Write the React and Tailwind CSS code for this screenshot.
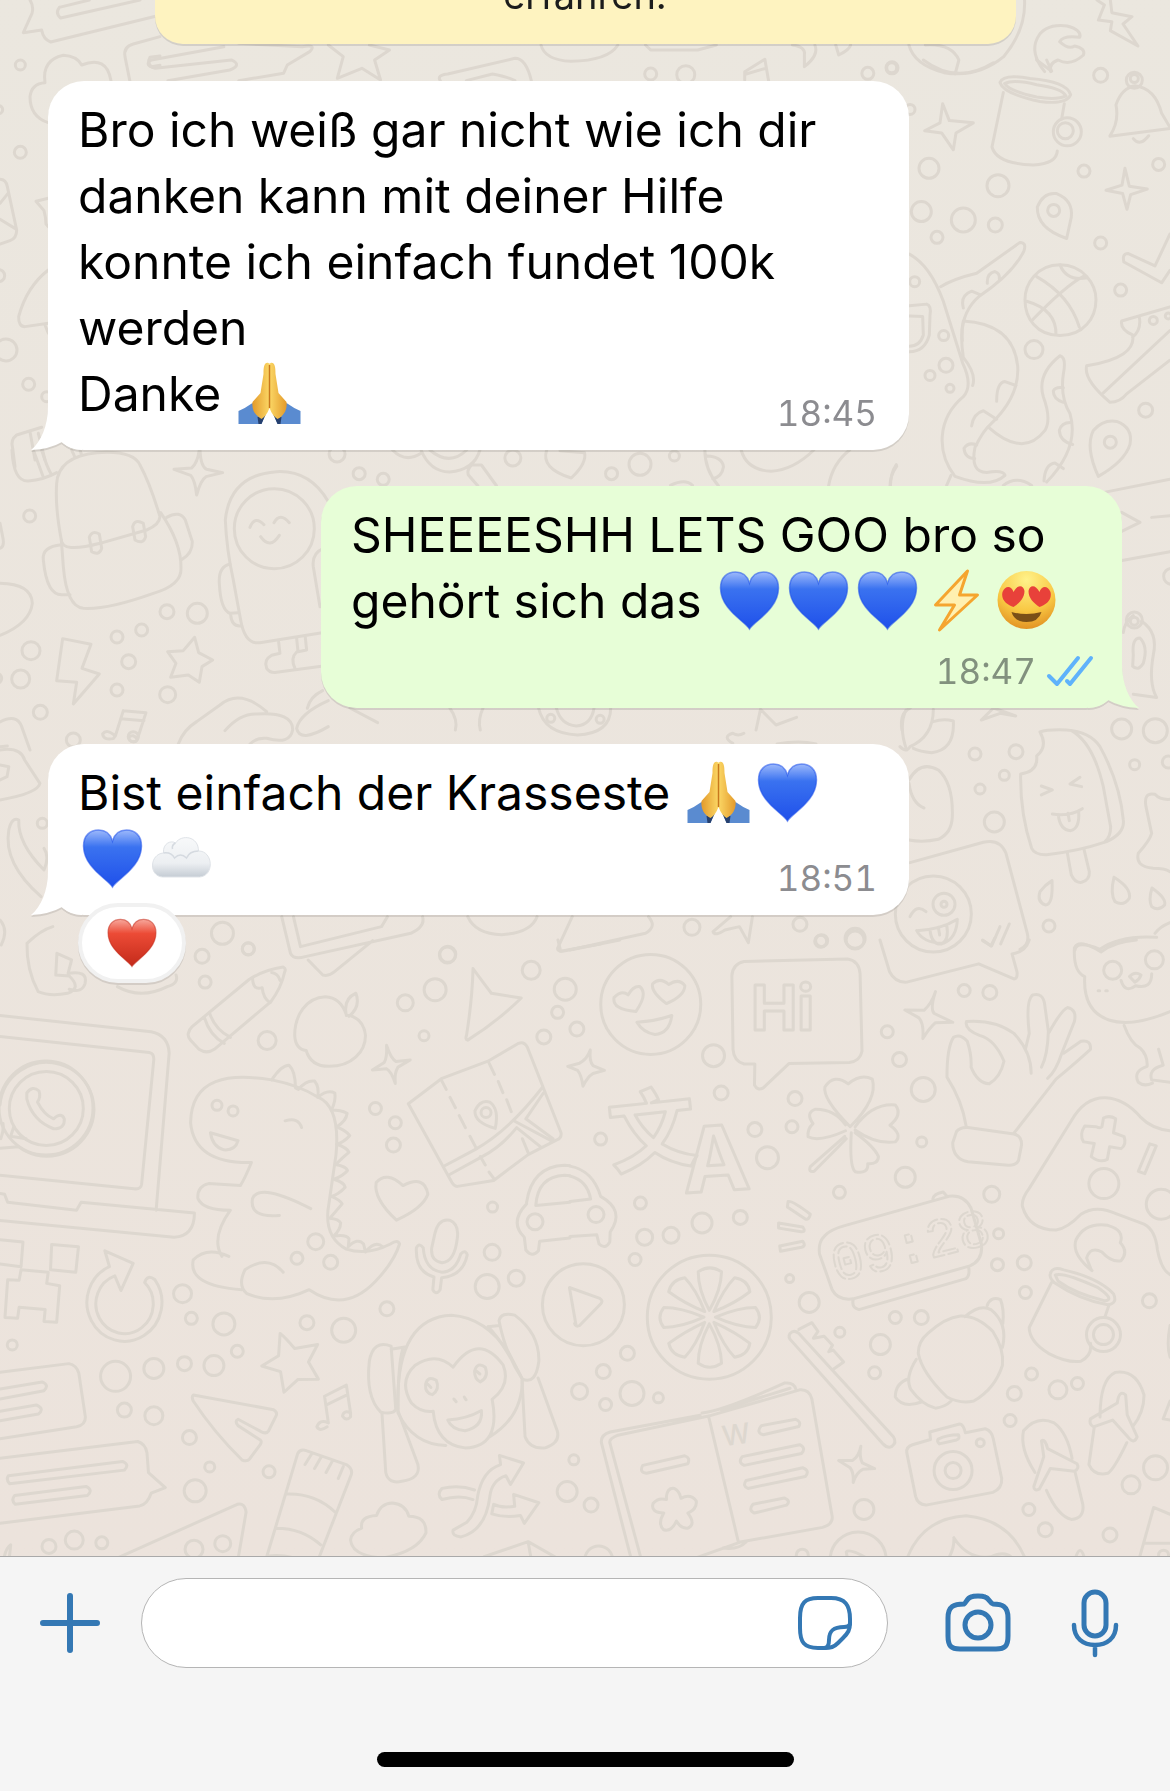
// src/App.jsx
import React, { useId } from 'react';

// Doodle wallpaper. Each tile has its own origin and scale, so the strokes are non-scaling.
const tiles = [
  {
    // top strip
    x: 0, y: 0, sx: 0.7462, sy: 0.3333,
    dots: [[872, 222, 6], [919, 224, 9], [1163, 220, 6], [1195, 203, 5], [1475, 226, 7]],
    paths: [
      'M320 130 L405 140 Q425 132 415 155 L385 195 L380 220 L320 242',
      'M203 180 L300 140 M208 205 L310 180 Q325 195 308 210 L225 242 M203 180 Q192 195 208 205',
      'M440 135 L460 170 L452 235 L485 205 L510 240 L502 180 L522 150 L495 135',
      'M590 242 Q585 225 600 222 L690 175 Q705 175 712 242 M625 242 L660 222 Q680 230 690 242',
      'M725 135 Q730 180 765 184 Q815 182 828 135 M865 135 L872 150 L935 150 L960 135',
      'M1062 135 Q1080 140 1078 165 L1078 200 Q1098 165 1092 135 M1120 135 L1124 165 Q1138 150 1140 135',
      'M998 240 L998 215 L1025 178 L1030 242 M1000 222 L1026 205',
      'M1218 135 Q1225 195 1265 218 Q1310 235 1345 170 Q1375 90 1373 0 M1240 135 Q1275 130 1285 180 L1280 222',
      'M1400 215 Q1380 160 1390 115 Q1400 70 1430 78 Q1450 90 1447 112 Q1425 105 1420 125 Q1432 150 1440 138 Q1455 145 1452 165 Q1435 200 1418 180 Q1405 190 1408 215',
      'M1470 0 L1480 15 L1472 60 L1490 65 L1488 92 L1525 138 L1505 72 L1517 50 L1490 38 L1488 0',
    ],
  },
  {
    // left column beside the first message
    x: 0, y: 0, sx: 0.3333, sy: 0.3333,
    dots: [[61, 195, 5], [61, 457, 6], [-4, 329, 4], [-4, 827, 6], [18, 1050, 11], [86, 1153, 6], [140, 1190, 5]],
    paths: [
      'M90 0 Q102 20 96 40 L70 98 L125 90 Q130 118 152 126 L470 48',
      'M178 22 L268 0 M178 22 Q165 40 182 54 L420 0',
      'M480 110 L400 132 Q370 140 375 170 L390 245 M480 168 L450 172 Q440 190 455 200 L480 196',
      'M145 368 Q90 350 90 290 Q95 250 135 248 Q125 180 190 166 Q230 168 245 195 Q320 165 333 242',
      'M0 538 Q18 538 22 560 L50 690 Q50 715 30 722 L0 732 M0 610 L24 580 M0 658 L46 686',
      'M145 595 L108 604 L132 632 Q138 655 138 672 L145 680',
      'M145 810 Q80 860 56 950 Q55 980 75 980 L145 970 M135 975 L145 1000',
      'M125 1282 L50 1305 Q30 1320 38 1345 L45 1400 M90 1295 L105 1380 M115 1300 L135 1380',
    ],
  },
  {
    // right column beside the first two messages
    x: 880, y: 60, sx: 0.3333, sy: 0.5612,
    dots: [[36, 14, 6], [90, 88, 5], [147, 193, 10], [354, 224, 11], [612, 198, 6], [836, 186, 6], [124, 270, 10], [250, 285, 12], [346, 294, 7], [171, 316, 6], [662, 326, 6], [722, 410, 6], [104, 395, 5], [191, 491, 5], [198, 544, 7], [462, 516, 9], [150, 562, 5], [210, 585, 4], [797, 624, 7], [691, 681, 6], [521, 268, 6], [763, 36, 8], [763, 33, 4], [562, 128, 14], [556, 126, 8], [820, 464, 4], [865, 456, 3], [763, 998, 8], [763, 1000, 4], [875, 920, 8]],
    paths: [
      'M130 0 Q230 45 340 5 M470 0 L515 20 L500 0',
      'M360 40 Q370 24 450 33 Q560 38 572 62 Q560 80 480 74 Q370 60 360 40 M374 42 Q400 34 470 44 Q545 50 558 64 Q530 72 470 66 Q390 56 374 42',
      'M370 58 L336 155 Q350 185 460 187 Q530 185 532 162 M553 78 L545 105',
      'M188 78 L208 108 L280 112 L228 130 L220 160 L185 130 L134 126 L180 112Z',
      'M735 193 L748 225 L802 230 L752 240 L741 266 L728 238 L678 232 L726 223Z',
      'M690 135 Q718 110 708 80 Q725 50 765 46 Q825 50 845 95 L870 120 M690 136 L870 122 M760 140 Q780 155 806 135',
      'M560 318 Q470 300 472 262 Q490 235 530 238 Q580 250 574 280Z',
      'M88 346 Q150 365 190 430 L248 540 Q280 580 250 600 C170 640 170 700 225 742 Q330 765 375 740 Q370 730 320 735 Q270 735 285 690 Q310 660 330 650 Q420 600 413 545 Q400 470 250 465 Q240 490 250 530 Q290 560 278 580',
      'M182 404 Q220 390 290 380 L420 325 Q440 325 432 340 Q400 380 300 420 Q240 450 247 500',
      'M325 654 Q430 710 495 660 Q515 640 490 600 Q470 560 540 527 Q560 530 550 560 Q540 600 570 630 Q600 690 500 752',
      'M322 398 Q320 380 345 377 Q360 380 358 390 M250 442 Q240 420 275 412 L300 418 M350 608 Q350 575 375 573 L408 580 M275 652 Q280 630 310 625 L350 640 M284 710 Q255 710 252 692 Q265 680 290 686 M550 610 Q520 605 520 590 Q525 582 550 584 M578 685 Q540 680 538 660 Q545 645 575 646 M492 750 Q495 720 525 718 L550 728',
      'M540 365 C610 365 648 400 648 427 C648 460 610 491 540 491 C470 491 435 460 435 427 C435 400 470 365 540 365Z M470 386 Q570 420 598 476 M540 365 Q560 395 622 388 M440 430 Q530 445 528 490 M454 465 Q560 400 612 385',
      'M732 360 Q725 345 745 345 L825 367 L870 310 M732 360 L845 397 L870 375',
      'M870 440 L725 465 Q720 480 758 490 Q770 530 620 545 Q610 570 690 610 Q720 610 740 595 L870 535 M870 482 L670 593 M758 494 Q785 480 778 458',
      'M655 742 Q615 690 640 660 Q670 640 710 644 Q760 655 750 685 Q735 715 655 742Z',
      'M88 438 L140 435 Q155 438 150 455 L148 490 Q135 520 88 520 M88 456 L128 457 L130 490 Q120 510 88 510',
      'M30 760 Q30 740 50 724 M200 758 L213 740 M370 758 Q410 740 455 758',
      'M676 770 L870 747 M725 840 L780 824 L725 806 M815 815 L870 812 M726 892 L870 876',
      'M730 1020 Q735 1000 760 990 M785 1000 Q835 1020 820 1060 Q805 1110 830 1136 L760 1130 M760 1060 Q755 1030 780 1030 Q805 1045 790 1075 Q775 1090 758 1080Z',
    ],
  },
  {
    // strip between message one and two
    x: 150, y: 440, sx: 0.491, sy: 0.3333,
    dots: [[381, 42, 8], [426, 101, 6], [475, 118, 6], [739, 54, 8], [940, 101, 6], [998, 73, 11], [1068, 48, 5]],
    paths: [
      'M494 30 Q520 70 552 40 M552 30 Q570 95 610 96 Q660 90 672 30 M570 30 Q610 80 645 30 M655 75 L675 75 L706 138 M655 75 Q645 90 648 104 L668 138',
      'M808 30 Q795 85 858 114 Q890 70 885 38 L835 32',
      'M1130 30 Q1130 90 1158 138 M1134 48 Q1165 50 1168 80 Q1165 110 1146 116 M1060 136 Q1090 115 1105 136',
      'M1204 30 Q1215 90 1265 94 Q1310 90 1352 30 M1425 30 Q1390 70 1382 138 M1520 74 Q1508 100 1508 138',
    ],
  },
  {
    // backpack, astronaut and music note
    x: 0, y: 450, sx: 0.3333, sy: 0.3333,
    dots: [[89, 198, 6], [93, 602, 9], [62, 687, 9], [121, 787, 7], [501, 485, 7], [592, 490, 10], [425, 540, 6], [351, 561, 6], [386, 635, 7], [351, 720, 6], [503, 734, 8], [220, 870, 7], [823, 236, 40], [-10, 685, 5]],
    paths: [
      'M36 0 Q40 95 85 93 Q130 90 170 68 M100 0 L130 82 M125 0 Q140 50 155 75 M215 0 L225 22 M240 0 L245 15',
      'M170 100 Q175 20 290 8 Q400 0 420 45 Q450 100 480 200 Q478 225 440 240 L300 280 Q185 310 184 270 Q165 170 170 100Z',
      'M184 270 L190 350 Q200 470 250 475 Q320 480 460 430 Q545 405 543 355 Q545 280 482 188',
      'M184 284 Q125 290 130 330 Q140 440 190 434 L210 434 M500 202 Q540 180 556 210 L577 275 Q578 310 546 328',
      'M268 262 Q275 240 298 252 L305 295 Q298 318 275 305Z M398 230 Q405 205 430 220 L437 260 Q430 285 405 270Z',
      'M600 0 Q602 50 620 58 L668 68 L618 80 Q602 90 590 135 Q585 90 572 76 L522 58 L575 54 Q592 40 598 0',
      'M985 155 Q930 60 830 65 Q690 75 676 210 Q680 300 700 390 L722 510 Q735 585 780 578 L985 545',
      'M750 232 Q765 195 792 224 M822 218 Q840 185 868 218 M782 260 Q810 300 838 256',
      'M690 342 Q655 350 658 400 Q662 480 690 490 L714 488 M692 494 Q695 530 722 528 M970 295 Q935 310 940 350 L960 470',
      'M836 576 L840 610 L815 616 Q790 630 800 655 Q810 670 830 667 L970 648 M890 565 L894 604 M916 562 L920 600 L890 606 Q870 625 885 655',
      'M188 566 L273 583 L246 655 L298 672 L220 762 L230 697 L170 692Z',
      'M584 562 L596 608 L638 630 L606 650 L598 697 L565 675 L512 682 L528 640 L503 605 L550 602Z',
      'M0 400 Q95 402 97 460 Q90 520 0 556 M0 295 Q15 290 8 260 L0 220',
      'M370 782 L438 788 L412 868 M370 782 L346 858 M362 806 L432 812 M346 858 Q320 835 308 852 Q310 872 340 866 L346 858 M412 868 Q400 850 386 862 Q390 880 408 874Z',
      'M0 816 Q50 790 65 830 L90 900 M0 890 L22 888',
      'M535 882 Q550 840 590 815 L660 765 Q720 715 800 785 M675 842 Q720 790 770 792 Q880 785 878 840 Q870 885 800 865 Q770 862 750 882',
      'M985 752 Q900 790 890 835 Q900 880 985 830 M922 775 Q930 740 968 722',
    ],
  },
  {
    // strip between message two and three
    x: 300, y: 470, sx: 0.5548, sy: 0.3333,
    dots: [[452, 745, 4], [541, 748, 4]],
    paths: [
      'M90 714 L140 758 M270 714 Q285 750 280 780 M330 714 Q320 750 325 780',
      'M430 714 Q440 790 500 795 Q560 790 560 714 M462 714 Q470 765 498 768 Q525 765 530 714 M822 780 L830 718 L858 765 L895 742',
      'M1085 780 Q1080 730 1100 714 M1228 750 L1250 714 L1290 738 L1262 730Z',
      'M780 820 Q760 800 780 790 Q790 800 800 790 M860 822 Q900 810 930 822',
    ],
  },
  {
    // around the third message
    x: 0, y: 730, sx: 0.5869, sy: 0.3333,
    dots: [[227, 20, 5], [72, 280, 5], [379, 610, 11], [423, 657, 6], [763, 673, 8], [1179, 592, 8], [1363, 583, 7], [1400, 632, 6], [1457, 625, 10]],
    paths: [
      'M0 60 Q35 50 42 90 L68 160 Q65 190 0 210 M0 105 L15 110 L12 140 L0 150',
      'M15 300 Q20 260 32 270 Q30 340 75 420 Q85 380 75 355 M15 300 Q5 400 70 500',
      'M46 640 Q70 600 90 590 M46 640 Q45 720 65 785 Q85 800 115 790 Q140 775 118 738 L95 735 L97 670 L122 690 L116 730 Q150 720 145 760 Q140 790 118 778',
      'M200 770 Q240 810 285 770 M285 770 Q305 760 300 735 M0 570 Q15 600 2 645',
      'M480 560 L495 670 Q500 690 520 680 L700 610 Q725 590 720 560 M500 560 L512 650 L650 590 L660 560 M525 690 L550 735 Q560 740 570 725 L635 632',
      'M797 560 Q810 612 855 614 Q905 608 915 560 M975 560 L950 655 Q950 668 965 662 L1100 610 Q1120 590 1105 560 M1215 605 L1245 560 M1215 605 Q1218 620 1235 600 L1260 590 L1275 638 L1282 560',
    ],
  },
  {
    // ice cream and winking card
    x: 900, y: 640, sx: 0.3333, sy: 0.3333,
    dots: [[225, 342, 6], [348, 335, 7], [313, 406, 5], [240, 447, 5], [283, 546, 10], [665, 267, 10], [766, 272, 12], [704, 374, 5], [805, 366, 6], [447, 858, 6], [132, 793, 11], [132, 793, 3], [100, 822, 38]],
    paths: [
      'M420 276 Q445 320 410 348 Q415 395 362 402 Q360 520 395 625 Q405 645 440 644 Q530 635 620 605 Q675 580 670 540 Q660 430 600 320 Q570 275 500 270 Q440 268 420 276Z M515 272 Q580 310 610 440 L632 560 Q632 590 615 605',
      'M424 438 L457 450 L424 465 M540 412 L510 432 L545 440 M457 522 Q510 530 547 506 M475 525 Q480 570 512 572 Q540 565 536 514 M504 520 L508 542',
      'M502 638 L514 705 Q525 730 545 727 Q570 720 568 695 L552 628',
      'M456 722 Q460 795 436 795 Q410 785 420 755 Q435 735 456 722Z M642 712 Q695 745 688 775 Q670 800 645 785 Q630 760 642 712Z M756 744 Q800 775 794 795 Q775 815 755 800 Q745 780 756 744Z',
      'M30 668 L250 607 Q300 595 318 640 L382 880 Q390 915 360 928',
      'M30 830 Q50 790 78 815 M50 872 Q120 870 172 838 Q170 895 130 910 Q70 910 50 872 M90 870 Q95 915 125 912 Q148 900 140 855 M115 862 L119 885 M248 902 L275 918 L300 860 M302 912 L328 852',
      'M27 420 Q60 360 115 390 Q160 430 157 530 Q155 580 115 598 Q70 608 27 600 M27 430 Q35 490 72 504 M0 320 Q20 340 30 320 Q100 290 100 208 M18 210 Q-5 260 20 330 M100 245 Q130 235 160 243 Q165 330 95 338 Q60 335 40 325',
      'M810 478 Q780 480 765 463 Q730 455 738 500 L755 580 Q750 600 715 640 Q705 680 760 685 Q795 685 810 695',
      'M525 930 Q530 900 600 928 Q660 885 770 892 M765 880 Q780 860 810 848',
    ],
  },
  {
    // lower left quarter
    x: 0, y: 940, sx: 0.3827, sy: 0.3974,
    dots: [[528, 41, 7], [649, 22, 6], [536, 106, 6], [698, 253, 9], [1169, 38, 8], [1137, 125, 11], [1059, 158, 8], [1108, 241, 5], [1388, 76, 9], [1477, 124, 11], [1457, 182, 6], [1421, 244, 7], [981, 424, 6], [1033, 460, 6], [1028, 516, 7], [567, 416, 5], [609, 430, 5], [1287, 672, 5], [1286, 786, 8], [1273, 872, 12], [1349, 851, 8], [1011, 928, 7], [825, 759, 8], [776, 801, 6], [864, 811, 7], [477, 890, 9], [500, 952, 6], [585, 966, 11], [802, 963, 7], [898, 982, 12], [32, 1019, 5], [620, 1035, 6], [302, 1098, 15], [402, 1078, 10], [482, 1066, 7], [559, 1071, 10], [325, 1183, 7], [402, 1197, 9], [495, 1252, 7], [548, 1326, 5], [510, 1386, 11], [703, 1338, 6], [128, 1526, 7], [194, 1510, 9], [266, 1517, 6], [507, 1533, 9], [582, 1519, 8], [1482, 1388, 10], [121, 424, 37], [1398, 709, 8], [1270, 434, 5]],
    paths: [
      'M492 235 Q494 225 502 218 L650 100 Q690 75 740 68 Q748 72 744 80 Q735 120 708 155 L560 275 Q540 288 520 275 L498 252 Q490 244 492 235Z M534 195 Q548 240 586 260 M548 185 Q562 225 602 245 M660 94 Q660 128 685 120 Q688 148 706 158 M710 82 Q726 84 732 102',
      'M905 188 Q890 145 850 143 C800 145 770 190 770 240 Q772 275 800 278 Q812 318 860 318 C920 318 955 280 955 240 Q950 195 905 188Z M905 190 Q896 148 930 134 Q943 168 912 192',
      'M1010 265 Q1022 300 1035 306 L1072 302 L1040 320 Q1030 335 1033 361 Q1022 330 1010 324 L973 327 L1004 308 Q1012 295 1010 265Z',
      'M1236 72 Q1265 110 1284 134 L1362 146 Q1300 205 1222 252 Q1215 250 1219 240 Q1234 150 1236 72Z',
      'M0 190 L395 231 Q440 240 442 285 L408 680 M0 243 L390 283 Q402 285 402 300 L370 615 Q368 628 350 626 L0 592 M0 638 L12 640 L20 660 L200 680 L212 660 L508 687 Q508 745 455 748 L0 706',
      'M0 415 A123 118 0 1 1 48 520 L0 524 M8 462 Q10 480 2 500',
      'M28 494 L68 500 M28 494 L36 470 M70 385 Q85 365 102 380 Q107 395 98 408 Q115 440 140 450 Q160 432 168 450 Q170 475 140 475 Q85 455 70 400Z',
      'M710 352 C600 335 500 345 498 460 C505 530 560 562 657 560 Q640 600 628 618 L545 613 Q515 620 517 650 Q530 680 602 680 Q550 750 580 796 M598 796 Q540 770 505 805 Q490 870 632 880 M740 836 Q700 790 640 830 Q620 870 645 890 Q720 920 808 880 Q900 940 980 860 Q1030 810 1044 765 Q1040 752 1020 765 Q960 795 905 778 Q850 750 857 680 L878 540 Q890 420 830 395 Q780 365 710 352',
      'M710 352 Q735 315 755 315 Q772 330 772 372 L780 376 Q800 352 822 355 Q835 370 830 396 Q855 375 875 385 Q878 405 866 428 Q890 428 907 436 Q905 455 880 470 Q905 480 914 492 Q900 508 880 514 Q905 522 912 534 Q895 548 877 565 Q905 570 908 580 Q895 595 872 602 Q900 610 902 622 Q885 640 866 645 Q890 655 894 664 Q880 680 862 700 Q885 702 890 712 Q890 728 872 745 Q905 740 912 752 L910 772 Q935 748 950 765 L955 785 Q980 755 1000 772',
      'M745 455 Q780 445 788 472 M550 485 L622 505 Q615 530 585 528 Q555 520 550 485Z M812 676 Q680 610 660 650 Q650 700 730 693',
      'M1036 705 Q975 650 983 610 Q1010 580 1053 618 Q1110 590 1118 640 Q1105 675 1036 705Z',
      'M1067 412 L1155 348 L1275 305 L1355 260 Q1370 255 1378 270 L1466 485 Q1468 498 1455 503 L1380 540 L1290 605 L1195 620 Q1185 620 1178 605Z M1162 568 L1240 528 Q1330 480 1418 370 M1175 590 L1260 545 Q1310 520 1350 472 L1412 520 M1345 456 L1440 505 M1420 385 L1374 450 L1445 500',
      'M1153 352 L1166 376 M1176 396 L1190 422 M1200 442 L1216 472 M1228 494 L1245 525 M1278 310 L1292 338 M1302 356 L1314 384 M1324 402 L1336 432 M1255 545 L1268 566 M1278 584 L1290 600 M1365 500 L1380 535',
      'M1294 474 Q1240 460 1241 430 Q1255 400 1280 408 Q1305 425 1294 474Z',
      'M1376 660 Q1390 570 1475 567 L1489 568 M1400 668 Q1405 595 1475 592 L1489 593 M1400 668 L1489 660 M1376 664 Q1330 710 1370 748 L1374 780 Q1390 800 1407 782 L1410 758 L1489 750',
      'M1136 740 Q1145 700 1175 705 Q1200 715 1195 750 Q1188 810 1155 812 Q1125 808 1128 775Z M1088 775 Q1095 760 1106 775 Q1110 830 1155 836 Q1190 835 1204 790 Q1215 778 1221 792 Q1210 845 1154 850 L1150 880 Q1140 895 1131 880 L1134 848 Q1085 835 1088 775Z',
      'M0 754 L60 760 L55 822 L0 815 M135 766 L205 772 L198 836 L132 830Z M55 830 L126 836 L122 864 L156 870 L148 962 L115 960 L118 930 L50 924 L46 952 L13 950 L20 855 L50 856Z',
      'M274 782 L348 814 L316 882 L300 845 A75 75 0 1 0 378 862 Q385 840 405 855 A98 98 0 1 1 286 822Z',
      'M732 990 Q745 1000 770 1028 L830 1018 L806 1062 L832 1105 L778 1106 L742 1138 L733 1086 L684 1072 L728 1046Z',
      'M0 1088 L180 1066 Q200 1070 206 1090 L223 1200 Q224 1220 200 1225 L0 1255 M0 1130 L110 1112 Q130 1120 115 1134 L0 1155 M0 1186 L95 1170 Q118 1180 100 1193 L0 1210',
      'M0 1304 L360 1262 Q380 1268 384 1290 L388 1340 L432 1378 L395 1392 Q385 1420 365 1424 L0 1468 M22 1348 L320 1312 Q340 1320 325 1334 L25 1368Q15 1358 22 1348Z M38 1398 L225 1375 Q245 1385 228 1398 L40 1420Q28 1410 38 1398Z',
      'M505 1145 L715 1182 Q725 1188 722 1196 L702 1235 Q695 1245 680 1236 L622 1206 Q612 1210 622 1222 L680 1258 Q685 1262 680 1270 L652 1306 Q645 1314 632 1308 Q560 1240 505 1160 Q500 1150 505 1145Z',
      'M848 1148 L905 1120 L916 1190 M848 1148 L858 1215 M853 1170 L908 1144 M858 1215 Q835 1205 828 1225 Q835 1238 855 1225 M916 1190 Q898 1182 895 1198 Q905 1212 916 1200Z',
      'M1040 1190 Q1030 950 1180 944 Q1270 950 1330 1040 L1365 1105 Q1365 1200 1280 1250 M1040 1190 Q1080 1270 1165 1272 M1184 1075 Q1140 1035 1085 1070 Q1040 1110 1075 1165 Q1100 1190 1132 1186 Q1140 1270 1215 1278 Q1310 1275 1286 1156 Q1335 1120 1315 1070 Q1250 985 1184 1075Z',
      'M1170 1208 Q1220 1205 1258 1184 Q1262 1225 1215 1235 Q1180 1232 1170 1208Z M1112 1118 Q1118 1095 1140 1108 Q1150 1130 1130 1144 Q1110 1140 1112 1118Z M1240 1085 Q1248 1060 1268 1075 Q1278 1100 1255 1112 Q1240 1105 1240 1085Z M1186 1155 L1192 1162 M1213 1150 L1218 1157 M1118 1118 L1126 1126 M1245 1085 L1254 1092',
      'M1022 1022 Q975 1005 965 1060 Q955 1150 995 1188 Q1030 1195 1034 1180 Z M1022 1030 L1058 1024 M1040 1180 Q1040 1070 1052 1030 M998 1190 L1008 1340 Q1015 1370 1050 1362 Q1100 1355 1092 1320 L1040 1185',
      'M1304 958 Q1310 935 1345 944 Q1410 990 1408 1060 Q1400 1120 1365 1105 Q1320 1040 1304 958Z M1275 973 L1305 970 M1364 1108 L1372 1250 Q1385 1282 1425 1278 Q1465 1265 1456 1235 L1406 1102 M1275 973 Q1310 1005 1365 1105',
      'M1305 1297 L1368 1316 L1334 1370 L1322 1348 Q1285 1360 1280 1400 Q1270 1485 1205 1502 Q1180 1500 1184 1485 L1220 1465 Q1245 1440 1248 1400 Q1260 1335 1308 1320Z M1240 1384 Q1200 1370 1155 1380 Q1140 1395 1155 1408 Q1200 1395 1236 1408 M1290 1420 Q1310 1430 1345 1425 L1342 1395 L1408 1416 L1370 1468 L1360 1448 Q1320 1455 1285 1444Z',
      'M945 1480 Q940 1450 984 1448 Q995 1418 1025 1417 Q1060 1420 1068 1450 Q1115 1450 1113 1492 Q1090 1540 1000 1555 Q920 1550 916 1510 Q918 1490 945 1480Z',
      'M695 1558 L778 1292 Q785 1280 800 1285 L905 1320 Q922 1330 918 1345 L832 1558 M815 1292 L797 1320 M840 1300 L822 1330 M868 1312 L852 1340 M897 1325 L884 1355 M750 1394 Q825 1392 876 1440 M722 1480 Q790 1480 838 1522 M700 1550 Q740 1545 778 1558',
      'M300 1558 L620 1420 Q640 1415 643 1440 L622 1558 M10 1558 Q15 1530 28 1522 L24 1558 M1265 1552 L1380 1514 L1455 1555 M1380 1514 L1388 1558',
      'M1488 875 L1505 968 M1458 0 L1465 28 L1568 10',
    ],
  },
  {
    // lower right quarter
    x: 570, y: 940, sx: 0.3827, sy: 0.3974,
    dots: [[655, 3, 6], [745, 0, 9], [18, 224, 7], [375, 291, 11], [395, 385, 7], [588, 399, 7], [483, 477, 7], [580, 470, 6], [80, 501, 6], [516, 548, 11], [829, 231, 6], [861, 301, 7], [923, 376, 12], [919, 508, 5], [1030, 127, 6], [1097, 132, 7], [876, 597, 10], [704, 635, 6], [1102, 640, 8], [184, 662, 6], [195, 748, 8], [264, 743, 8], [345, 712, 10], [445, 698, 7], [170, 804, 6], [574, 852, 4], [625, 912, 10], [1120, 739, 5], [1117, 817, 6], [1187, 812, 7], [1190, 887, 6], [850, 950, 6], [918, 950, 7], [705, 987, 5], [811, 1018, 10], [796, 1089, 6], [150, 1040, 7], [87, 1086, 7], [25, 1136, 8], [162, 1141, 12], [231, 1152, 5], [93, 1169, 6], [1206, 1092, 6], [1161, 1141, 7], [1275, 1132, 9], [1326, 1116, 6], [1150, 1209, 6], [1514, 908, 7], [1395, 613, 15], [1545, 665, 15], [10, 1308, 5], [55, 1422, 7], [768, 1433, 10], [1199, 1433, 6], [1242, 1484, 7], [1411, 1497, 7], [1466, 1371, 9], [1530, 1328, 12], [607, 1548, 6], [75, 1560, 14], [211, 162, 50], [364, 949, 62], [68, 691, 8], [1394, 993, 17], [1394, 993, 10], [1001, 1335, 19], [1001, 1335, 8], [1072, 1265, 4], [1418, 76, 9], [1527, 50, 9], [753, 1560, 28], [35, 918, 41], [1551, 1548, 5]],
    paths: [
      'M172 180 Q110 175 115 145 Q135 125 152 138 Q165 115 182 117 Q205 135 172 180Z M252 160 Q210 130 216 110 Q235 92 258 112 Q285 95 300 115 Q300 140 252 160Z M175 207 Q220 205 266 190 Q260 235 222 238 Q190 232 175 207Z',
      'M455 54 L725 48 Q755 52 758 85 L763 280 Q758 305 730 308 L572 311 L505 372 Q490 380 482 365 L483 312 L455 312 Q428 305 426 275 L423 90 Q425 60 455 54Z',
      'M955 130 Q940 175 952 185 L1000 207 L955 208 Q940 220 922 248 Q925 210 912 196 L875 176 L925 177 Q945 160 955 130Z',
      'M53 277 Q50 305 60 316 L90 328 L60 336 Q45 345 34 368 Q30 340 20 328 L-6 318 L25 310 Q45 300 53 277',
      'M1035 468 Q1025 405 985 345 Q985 270 1002 245 Q1020 235 1038 255 Q1050 290 1048 320 Q1065 360 1095 362 Q1125 345 1134 305 Q1110 250 1070 240 Q1030 225 1036 205 Q1110 200 1160 235 Q1205 280 1205 335 M1190 275 L1200 235 Q1190 150 1210 138 Q1235 132 1240 160 L1250 230 Q1248 290 1232 320 M1252 232 Q1285 175 1300 170 Q1325 175 1318 205 L1285 285 Q1270 330 1248 348 M1290 285 L1335 255 Q1362 250 1360 275 Q1320 310 1270 350 L1160 486',
      'M1010 482 Q1020 470 1040 472 L1160 488 Q1180 492 1180 515 L1172 555 Q1165 568 1145 567 L1040 558 Q1000 550 1000 510Z',
      'M732 470 Q660 400 666 370 Q690 335 727 362 Q760 335 790 350 Q805 400 732 470Z M720 480 Q650 510 622 495 Q620 475 635 462 Q615 435 640 426 Q690 425 720 465 M745 470 Q790 410 850 415 Q870 440 836 466 Q870 490 850 508 Q800 515 745 478 M735 485 Q730 570 745 583 Q780 590 778 563 Q805 565 806 545 Q795 520 745 485 M718 494 L628 570 Q622 585 638 582 L722 500',
      'M0 569 Q60 580 80 645 Q145 680 105 735 L104 760 Q92 780 76 765 L70 742 L0 746 M0 594 Q45 605 54 652 L0 658',
      'M570 658 Q580 655 628 690 Q625 705 615 702 L568 672Z M545 712 L608 722 Q618 735 604 734 L545 725Z M548 770 L608 758 Q618 770 605 773 L550 783Z',
      'M665 745 Q680 728 720 718 L990 645 Q1030 640 1048 675 L1075 765 Q1080 805 1045 820 L740 903 Q700 908 685 880 L652 790 Q648 760 665 745Z M948 652 Q950 638 975 634 L985 645 M740 905 Q735 925 755 930 L1035 852 Q1045 845 1042 825',
      'M335 835 Q365 815 396 835 Q395 880 364 932 Q335 880 335 835Z M335 1065 Q365 1085 396 1065 Q395 1020 364 966 Q335 1020 335 1065Z M245 925 Q225 950 245 975 Q290 975 350 949 Q290 925 245 925Z M485 925 Q505 950 485 975 Q440 975 380 949 Q440 925 485 925Z M258 885 Q265 855 300 850 Q330 880 352 935 Q300 915 258 885Z M470 885 Q465 855 430 850 Q400 880 376 935 Q430 915 470 885Z M258 1015 Q265 1045 300 1050 Q330 1020 352 962 Q300 985 258 1015Z M470 1015 Q465 1045 430 1050 Q400 1020 376 962 Q430 985 470 1015Z',
      'M575 990 Q585 980 598 990 L845 1250 Q855 1265 840 1275 Q830 1280 818 1268 L580 1010 Q568 1000 575 990Z M598 980 L632 963 L648 985 L636 1002 L664 997 L686 1020 L676 1036 L688 1032 L715 1062 L688 1080',
      'M910 1040 Q910 1010 935 990 Q980 950 1020 946 Q1065 945 1105 985 Q1135 1030 1130 1070 Q1110 1130 1055 1160 Q1020 1168 985 1150Q920 1090 910 1040Z M1032 948 Q1070 915 1100 930 Q1145 965 1130 1025 M1090 920 Q1100 895 1125 905 Q1135 930 1131 965 M905 1055 Q875 1100 890 1130 Q920 1170 955 1178 Q980 1175 996 1160 M885 1104 Q850 1115 850 1150 Q870 1180 920 1162',
      'M1182 670 Q1180 650 1200 625 L1310 455 Q1345 395 1400 397 Q1450 400 1490 445 Q1520 475 1568 480 M1182 670 Q1200 730 1270 730 Q1300 725 1335 690 Q1375 665 1430 690 L1500 715 Q1530 730 1535 780 Q1545 830 1568 842',
      'M1390 470 L1394 448 Q1410 440 1426 450 L1420 485 L1448 495 Q1455 515 1440 525 L1410 520 L1404 552 Q1385 562 1362 545 L1370 512 L1342 508 Q1330 490 1345 468 L1375 470 Q1385 475 1390 470Z M1515 513 L1532 518 L1502 588 L1485 582Z',
      'M1255 840 Q1260 820 1290 830 Q1380 850 1420 890 Q1432 915 1405 918 Q1330 905 1265 862 Q1252 850 1255 840Z M1268 843 Q1290 835 1380 875 Q1425 905 1398 908 Q1320 890 1275 858Z M1258 862 L1200 975 Q1200 1010 1250 1040 Q1300 1065 1335 1060 Q1365 1045 1360 1015 M1408 920 L1398 948 M1364 832 Q1310 790 1322 755 Q1345 710 1405 718 Q1450 730 1438 762 Q1460 785 1440 807 Q1415 812 1390 785 Q1360 770 1350 800 L1362 830',
      'M1385 1200 Q1385 1105 1425 1088 Q1480 1080 1500 1145 Q1500 1190 1470 1225 M1360 1205 L1430 1165 Q1435 1130 1452 1145 L1456 1195 L1482 1250 Q1475 1268 1462 1255 L1418 1208 L1368 1225 Q1355 1218 1360 1205Z M1370 1225 L1356 1320 Q1370 1350 1405 1342 Q1420 1335 1455 1265',
      'M1215 1340 Q1175 1280 1185 1235 Q1220 1195 1265 1215 Q1300 1240 1312 1305 M1232 1260 Q1242 1255 1248 1280 L1325 1318 Q1332 1330 1318 1337 L1255 1330 L1226 1382 Q1212 1388 1212 1375 L1238 1300Z M1245 1385 Q1275 1450 1310 1458 Q1345 1455 1340 1420 L1320 1340',
      'M880 1290 Q878 1275 895 1270 L942 1257 L940 1238 L1018 1218 Q1028 1218 1033 1240 L1085 1230 Q1102 1235 1106 1255 L1128 1355 Q1130 1380 1105 1390 L930 1422 Q908 1420 903 1400Z M962 1256 Q985 1245 1015 1245 Q1020 1255 1010 1258 L965 1268 Q958 1262 962 1256Z',
      'M760 1274 Q755 1300 764 1316 L796 1330 L765 1332 Q748 1340 740 1365 Q742 1340 732 1328 L702 1310 L738 1310 Q755 1300 760 1274Z',
      'M160 1558 L82 1265 Q80 1245 105 1238 L340 1196 M186 1558 L104 1265 Q102 1255 125 1246 L362 1198 L600 1132 Q625 1130 632 1155 L685 1450 Q688 1470 660 1478 L445 1515 L320 1558 M362 1198 L440 1515 M345 1190 Q400 1185 560 1115 Q585 1112 590 1130 M395 1182 L575 1128 M400 1530 Q440 1535 460 1515',
      'M190 1322 L300 1298 Q315 1302 308 1318 L200 1342 Q180 1340 190 1322Z M500 1222 L590 1206 Q605 1212 598 1224 L505 1245 Q485 1240 500 1222Z M450 1300 L600 1270 Q618 1278 605 1292 L455 1322 Q438 1315 450 1300Z M460 1360 L608 1328 Q628 1335 615 1350 L465 1380 Q450 1375 460 1360Z M478 1420 L560 1404 Q578 1412 566 1422 L482 1442 Q465 1435 478 1420Z',
      'M252 1400 Q255 1378 272 1380 Q285 1385 290 1405 Q315 1392 330 1412 Q332 1432 308 1442 Q330 1470 308 1480 Q290 1482 278 1462 Q265 1490 245 1484 Q228 1470 245 1442 Q210 1440 217 1418 Q230 1402 252 1408Z',
      'M880 1558 Q920 1455 1035 1449 Q1150 1460 1190 1558 M1003 1504 Q1005 1530 988 1558 M1003 1504 Q1040 1560 1100 1552 Q1140 1535 1158 1558 M725 1558 L722 1540 Q730 1530 780 1558 M1320 1558 Q1333 1515 1345 1558 M1487 1558 L1525 1428 L1568 1445 M1500 1518 L1568 1518',
      'M1388 30 Q1330 -5 1318 20 Q1315 80 1345 92 Q1340 180 1410 202 Q1470 220 1568 180 M1388 30 Q1420 5 1480 0 M1462 92 Q1475 78 1492 88 Q1488 100 1476 106Z M1440 102 Q1450 135 1478 115 Q1520 125 1520 85 M1448 215 Q1465 260 1490 272 Q1510 290 1508 318 Q1470 330 1485 358 Q1500 370 1522 360 M1538 275 L1550 315 Q1510 325 1520 352 L1568 358 M1380 128 L1384 128 M1400 128 L1404 128',
      'M810 0 L835 80 Q850 108 880 106 L1068 60 L1160 98 Q1170 98 1168 80 L1155 35 Q1190 30 1200 0 M1078 0 L1100 15 L1110 -5',
      'M0 25 L130 0 M0 875 L78 902 Q88 908 80 916 L25 970 Q15 975 12 965 M1568 970 Q1558 1020 1568 1050 M1568 1160 L1550 1205 L1568 1208',
    ],
  },
];

const Wallpaper = () => (
  <svg
    className="absolute inset-0 h-full w-full"
    viewBox="0 0 1170 1556"
    preserveAspectRatio="xMidYMin slice"
    fill="none"
    stroke="#ddd7cf"
    strokeWidth="3"
    strokeLinecap="round"
    strokeLinejoin="round"
    aria-hidden="true"
  >
    {tiles.map((tile, i) => (
      <g key={i} transform={`translate(${tile.x} ${tile.y}) scale(${tile.sx} ${tile.sy})`}>
        {tile.paths.map((d, j) => (
          <path key={j} d={d} vectorEffect="non-scaling-stroke" />
        ))}
        {tile.dots.map(([x, y, r], j) => (
          <ellipse key={j} cx={x} cy={y} rx={r / tile.sx} ry={r / tile.sy} vectorEffect="non-scaling-stroke" />
        ))}
      </g>
    ))}
    <circle cx="46" cy="1108" r="47" />
    <g fontFamily="Inter, sans-serif" fontWeight="700">
      <text x="751" y="1030" fontSize="62">Hi</text>
      <text x="682" y="1191" fontSize="90" transform="rotate(-4 714 1160)">A</text>
      <text x="608" y="1162" fontSize="88" fontFamily="'Noto Sans CJK SC', sans-serif" transform="rotate(-6 660 1130)">文</text>
      <text x="722" y="1444" fontSize="28" fontWeight="500" fill="#ddd7cf" stroke="none" transform="rotate(-8 738 1434)">W</text>
      <text x="836" y="1282" fontSize="54" fontFamily="'Liberation Mono', monospace" fontWeight="400" strokeWidth="2" strokeDasharray="12 4" transform="rotate(-14 836 1282)">09:28</text>
    </g>
  </svg>
);

const HEART = 'M32 60 C27 52 3 40 3 19 C3 8 10 3 18 3 C25 3 30 7 32 14 C34 7 39 3 46 3 C54 3 61 8 61 19 C61 40 37 52 32 60Z';

const Heart = ({ from, mid, to, label, className }) => {
  const id = useId();
  return (
    <svg viewBox="0 0 64 63" className={className} role="img" aria-label={label}>
      <defs>
        <linearGradient id={id} x1="0" y1="0" x2="0" y2="1">
          <stop offset="0" stopColor={from} />
          <stop offset="0.3" stopColor={mid} />
          <stop offset="1" stopColor={to} />
        </linearGradient>
      </defs>
      <path d={HEART} fill={`url(#${id})`} stroke={to} strokeOpacity="0.55" strokeWidth="1.5" />
    </svg>
  );
};

const emojiBox = 'mx-[2px] inline-block h-[63px] w-[65px] align-[-14px]';

const BlueHeart = () => <Heart className={emojiBox} label="💙" from="#9db9fb" mid="#3a72f0" to="#1f50ea" />;

const Hands = () => {
  const id = useId();
  return (
    <svg viewBox="0 0 64 63" className={emojiBox} role="img" aria-label="🙏">
      <defs>
        <linearGradient id={id} x1="0" x2="1">
          <stop offset="0" stopColor="#e39a2b" />
          <stop offset="0.5" stopColor="#fbd765" />
          <stop offset="1" stopColor="#e39a2b" />
        </linearGradient>
      </defs>
      <path d="M1 49 Q8 46 15 41 L27 54 L24 62 H1Z M63 49 Q56 46 49 41 L37 54 L40 62 H63Z" fill="#5a8bd0" />
      <path d="M20 55 L28 53 L24 62 H21Z M44 55 L36 53 L40 62 H43Z" fill="#26406f" />
      <path d="M31 1 C27 0 26 4 26 12 L23 31 L15 40 C14 48 18 54 24 57 Q29 54 32 46 Q35 54 40 57 C46 54 50 48 49 40 L41 31 L38 12 C38 4 37 0 33 1 Q32 2 31 1Z" fill={`url(#${id})`} />
      <path d="M32 3 V46" stroke="#c9781d" strokeWidth="1.5" />
    </svg>
  );
};

const Bolt = () => (
  <svg viewBox="0 0 64 63" className={emojiBox} role="img" aria-label="⚡">
    <path d="M43 2 L11 36 L30 36 L15 61 L53 26 L35 26Z" fill="#fff0b0" stroke="#f5a52f" strokeWidth="3" strokeLinejoin="round" />
  </svg>
);

const HeartEyes = () => {
  const id = useId();
  return (
    <svg viewBox="0 0 64 63" className={emojiBox} role="img" aria-label="😍">
      <defs>
        <radialGradient id={id} cx="0.5" cy="0.15" r="0.9">
          <stop offset="0" stopColor="#fff28a" />
          <stop offset="0.6" stopColor="#f8c742" />
          <stop offset="1" stopColor="#df8b1f" />
        </radialGradient>
      </defs>
      <circle cx="33" cy="31" r="29" fill={`url(#${id})`} />
      <path d="M20 38 C14 36 7 31 9 23 C12 16 18 17 20 23 C24 15 30 16 31 22 C31 29 26 34 20 38Z M46 38 C52 36 59 31 57 23 C54 16 48 17 46 23 C42 15 36 16 35 22 C35 29 40 34 46 38Z" fill="#e8413a" />
      <path d="M18 43 Q33 47 48 43 Q45 53 33 53 Q21 53 18 43Z" fill="#7a4f17" />
    </svg>
  );
};

const Cloud = () => {
  const id = useId();
  return (
    <svg viewBox="0 0 64 63" className={emojiBox} role="img" aria-label="☁️">
      <defs>
        <linearGradient id={id} x1="0" y1="0" x2="0" y2="1">
          <stop offset="0" stopColor="#f8f9fa" />
          <stop offset="0.65" stopColor="#eceff2" />
          <stop offset="1" stopColor="#c5ccd4" />
        </linearGradient>
      </defs>
      <path d="M13 50 C-1 49 0 27 14 26 C13 16 22 13 26 16 C32 7 49 9 49 24 C64 24 65 49 50 50Z" fill={`url(#${id})`} stroke="#dfe3e8" />
      <path d="M14 26 Q22 25 25 31 Q31 25 37 31 Q40 24 49 24 M26 16 Q22 18 23 22" fill="none" stroke="#d5dae0" strokeWidth="1.5" />
    </svg>
  );
};

const Tail = ({ own }) => (
  <svg
    viewBox="0 0 51 44"
    className={own ? 'absolute -right-[17px] bottom-0 h-11 w-[51px] -scale-x-100 text-[#e7fed7]' : 'absolute bottom-0 -left-[17px] h-11 w-[51px] text-white'}
    aria-hidden="true"
  >
    <path d="M17 0 C17 20 10 36 0 44 Q19 43 31 36 Q39 44 51 44 V0Z" fill="currentColor" />
  </svg>
);

const Ticks = () => (
  <svg viewBox="0 0 48 32" className="h-8 w-12" fill="none" stroke="#5fb2fb" strokeWidth="4" strokeLinecap="round" strokeLinejoin="round" role="img" aria-label="Gelesen">
    <path d="M3 21 L11 29 L32 3 M21 26 L24 29 L45 3" />
  </svg>
);

const Message = ({ time, own, reaction, children }) => (
  <li className={own ? 'flex justify-end' : 'flex justify-start'}>
    <div
      className={
        own
          ? 'relative max-w-[801px] rounded-[36px] bg-[#e7fed7] px-[30px] pt-4 pb-[74px] drop-shadow-[0_2px_0_rgba(0,0,0,0.1)]'
          : 'relative max-w-[861px] rounded-[36px] bg-white px-[30px] pt-4 pb-[23px] drop-shadow-[0_2px_0_rgba(0,0,0,0.1)]'
      }
    >
      <Tail own={own} />
      <p className="relative text-[48px] leading-[66px] text-black">{children}</p>
      <div className="absolute right-7 bottom-4 flex items-center gap-[10px]">
        <time className={own ? 'text-[35px] leading-[42px] text-[#82917e] tabular-nums' : 'pr-1 text-[35px] leading-[42px] text-[#8c8c90] tabular-nums'}>{time}</time>
        {own && <Ticks />}
      </div>
      {reaction && (
        <button type="button" aria-label="Reaktion" className="absolute top-full left-[30px] -mt-3 flex h-20 w-[108px] items-center justify-center rounded-full border-4 border-[#f1f1f1] bg-white">
          {reaction}
        </button>
      )}
    </div>
  </li>
);

const icon = { fill: 'none', stroke: '#3478b4', strokeLinecap: 'round', strokeLinejoin: 'round' };

const Composer = () => (
  <footer className="border-t border-[#a9a9a9] bg-[#f5f5f5] pt-[21px] pb-6">
    <form className="flex items-center pr-[51px] pl-10" onSubmit={(e) => e.preventDefault()}>
      <button type="button" aria-label="Anhang">
        <svg viewBox="0 0 60 60" className="size-[60px]" {...icon} strokeWidth="6">
          <path d="M30 3 V57 M3 30 H57" />
        </svg>
      </button>
      <div className="relative ml-[41px] flex-1">
        <input type="text" aria-label="Nachricht" className="block h-[90px] w-full rounded-full border border-[#b5b5b5] bg-white pr-28 pl-9 text-[48px] outline-none" />
        <button type="button" aria-label="Sticker" className="absolute inset-y-0 right-[34px] flex items-center">
          <svg viewBox="0 0 58 58" className="size-[58px]" {...icon} strokeWidth="4">
            <path d="M22 4 H35 C49 4 54 11 54 25 V29 C54 36 52 39 47 44 L42 49 C38 53 35 54 28 54 H22 C8 54 4 48 4 34 V24 C4 9 9 4 22 4Z" />
            <path d="M54 30 Q53 33 48 33 C37 33 33 37 33 46 C33 51 32 54 28 54" />
          </svg>
        </button>
      </div>
      <button type="button" aria-label="Kamera" className="ml-[57px]">
        <svg viewBox="0 0 66 60" className="h-[60px] w-[66px]" {...icon} strokeWidth="5">
          <path d="M19 11 C21 10 22 5 26 4 Q28 3 33 3 Q38 3 40 4 C44 5 45 10 48 11 C57 11 63 13 63 25 V43 C63 53 60 56 51 56 H15 C6 56 3 53 3 43 V25 C3 13 9 11 19 11Z" />
          <circle cx="33" cy="32" r="13" />
        </svg>
      </button>
      <button type="button" aria-label="Sprachnachricht" className="ml-[60px]">
        <svg viewBox="0 0 48 70" className="h-[70px] w-12" {...icon} strokeWidth="5">
          <rect x="13" y="4" width="22" height="44" rx="11" />
          <path d="M3 37 C3 50 12 57 24 57 C36 57 45 50 45 37 M24 57 V67" strokeWidth="4.5" />
        </svg>
      </button>
    </form>
    <div className="mx-auto mt-[84px] h-[15px] w-[417px] rounded-full bg-black" />
  </footer>
);

const App = () => (
  <div className="flex min-h-screen flex-col font-['Inter',sans-serif]">
    <main className="relative flex-1 overflow-hidden bg-linear-to-b from-[#ebe7df] to-[#ece3dc]">
      <Wallpaper />
      <div className="relative pr-12 pb-16 pl-12">
        <p className="mx-auto -mt-[29px] max-w-[861px] rounded-b-[28px] bg-[#fef3c0] pb-[25px] text-center text-[38px] leading-[48px] text-[#1c1c1c] drop-shadow-[0_2px_0_rgba(0,0,0,0.1)]">
          erfahren.
        </p>
        <ul className="mt-[37px] flex flex-col gap-9">
          <Message time="18:45">
            Bro ich weiß gar nicht wie ich dir danken kann mit deiner Hilfe konnte ich einfach fundet 100k werden
            <br />
            Danke <Hands />
          </Message>
          <Message time="18:47" own>
            SHEEEESHH LETS GOO bro so gehört sich das <BlueHeart /><BlueHeart /><BlueHeart /><Bolt /><HeartEyes />
          </Message>
          <Message time="18:51" reaction={<Heart className="h-[52px] w-[54px]" label="❤️" from="#f7a79b" mid="#ec4b36" to="#c32a1a" />}>
            Bist einfach der Krasseste <Hands /><BlueHeart /> <BlueHeart /><Cloud />
          </Message>
        </ul>
      </div>
    </main>
    <Composer />
  </div>
);

export default App;
